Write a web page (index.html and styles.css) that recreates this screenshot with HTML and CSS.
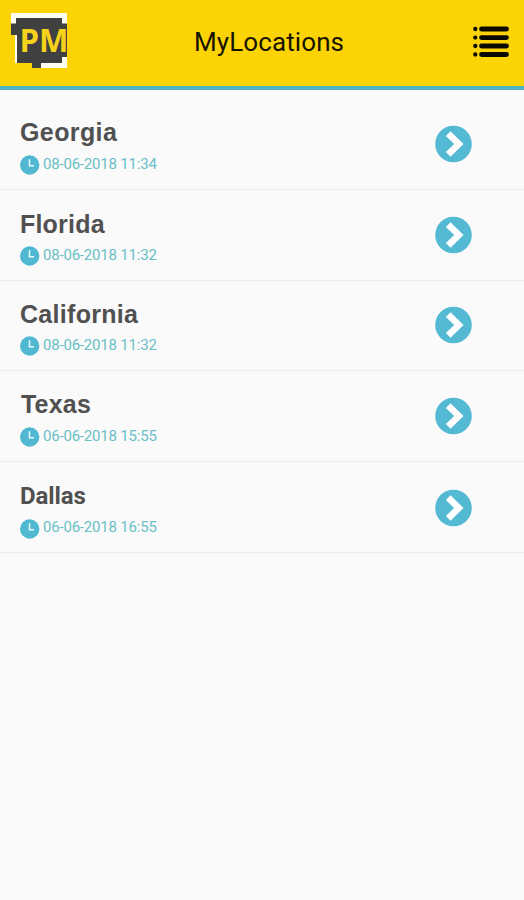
FILE: index.html
```
<!DOCTYPE html>
<html lang="en">
  <head>
    <meta charset="utf-8">
    <title>MyLocations</title>
    <link rel="stylesheet" href="styles.css">
  </head>
  <body>
    <svg class="symbols">
      <symbol id="clock" viewBox="0 0 20 20">
        <circle cx="9.7" cy="10" r="9.7" fill="#50b8d1"/>
        <path d="M9.500 4.200V10.800H14" fill="none" stroke="#e9fbff" stroke-width="1.500"/>
      </symbol>
      <symbol id="go" viewBox="0 0 38 38">
        <circle cx="19.500" cy="19" r="18.300" fill="#54b9d3"/>
        <path d="M14.200 8.700L24.800 19L14.200 29.300" fill="none" stroke="#fff" stroke-width="6.600"/>
      </symbol>
    </svg>
    <header class="topbar">
      <svg class="logo" width="60" height="60" viewBox="0 0 60 60">
        <path d="M1 2H57V57H31V52H5V24H1Z" fill="#fffdf0"/>
        <path d="M6 7H52V12.500H57V46H52V52H31V57H22V52H7V24H1V12.500H6Z" fill="#3f4040"/>
        <text class="logo-text" x="9.500" y="41" textLength="49" lengthAdjust="spacingAndGlyphs">PM</text>
      </svg>
      <h1>MyLocations</h1>
      <svg class="menu" width="38" height="34" viewBox="0 0 38 34">
        <g stroke="#0b0900" stroke-width="4.800" stroke-linecap="round">
          <path d="M9.500 4H34.500M9.500 12.600H34.500M9.500 21H34.500M9.500 29.500H34.500"/>
          <path stroke-width="4.300" d="M3.300 4h.01M3.300 12.600h.01M3.300 21h.01M3.300 29.500h.01"/>
        </g>
      </svg>
    </header>
    <ul class="locations">
      <li>
        <div class="info">
          <h2>Georgia</h2>
          <p><svg class="clock"><use href="#clock"/></svg><span>08-06-2018 11:34</span></p>
        </div>
        <svg class="go"><use href="#go"/></svg>
      </li>
      <li>
        <div class="info">
          <h2 class="florida">Florida</h2>
          <p><svg class="clock"><use href="#clock"/></svg><span>08-06-2018 11:32</span></p>
        </div>
        <svg class="go"><use href="#go"/></svg>
      </li>
      <li class="short">
        <div class="info">
          <h2 class="california">California</h2>
          <p><svg class="clock"><use href="#clock"/></svg><span>08-06-2018 11:32</span></p>
        </div>
        <svg class="go"><use href="#go"/></svg>
      </li>
      <li>
        <div class="info">
          <h2 class="texas">Texas</h2>
          <p><svg class="clock"><use href="#clock"/></svg><span>06-06-2018 15:55</span></p>
        </div>
        <svg class="go"><use href="#go"/></svg>
      </li>
      <li class="last">
        <div class="info">
          <h2 class="dallas">Dallas</h2>
          <p><svg class="clock"><use href="#clock"/></svg><span>06-06-2018 16:55</span></p>
        </div>
        <svg class="go"><use href="#go"/></svg>
      </li>
    </ul>
  </body>
</html>
```
FILE: styles.css
```
* {
  box-sizing: border-box;
}
body {
  margin: 0;
  min-height: 100vh;
  background: #fafafa;
  font-family: Roboto, "Liberation Sans", sans-serif;
}
.symbols {
  display: none;
}
.topbar {
  display: grid;
  grid-template-columns: 184px 1fr 61px;
  height: 90px;
  padding-left: 10px;
  background: #fcd405;
  border-bottom: 4px solid #4db2c4;
}
.topbar h1 {
  margin: 27px 0 0;
  color: #171300;
  font-size: 26px;
  line-height: 30px;
  font-weight: 400;
  letter-spacing: 0.1px;
  white-space: nowrap;
}
.logo {
  margin-top: 11px;
}
.logo-text {
  font: 700 32px "Open Sans", sans-serif;
  fill: #f6d21a;
}
.menu {
  margin: 25px 0 0 9px;
}
.locations {
  margin: 0;
  padding: 9px 0 0;
  list-style: none;
}
.locations li {
  display: flex;
  justify-content: space-between;
  height: 91px;
  padding: 18px 52px 0 20px;
  border-bottom: 1px solid #ececec;
}
.locations li.short {
  height: 90px;
  padding-top: 17px;
}
.locations li.last {
  padding-top: 18.5px;
}
.info h2 {
  margin: 0;
  height: 38px;
  color: #505050;
  font: bold 25px/30px "Liberation Sans", Arial, sans-serif;
  letter-spacing: 0.4px;
}
.info .florida {
  padding-top: 1px;
  letter-spacing: 0.2px;
}
.info .california {
  padding-top: 1px;
  letter-spacing: 0.3px;
}
.info .texas {
  padding-left: 1px;
  letter-spacing: 0.2px;
}
.info .dallas {
  font: bold 24px/30px Roboto, sans-serif;
  letter-spacing: -0.1px;
}
.info p {
  display: flex;
  align-items: center;
  gap: 3px;
  margin: 0;
  height: 20px;
  color: #69bfc6;
  font-size: 15px;
  line-height: 18px;
  letter-spacing: -0.2px;
}
.info span {
  margin-top: -3px;
}
.clock {
  width: 20px;
  height: 20px;
}
.go {
  width: 38px;
  height: 38px;
  margin-top: 8px;
}
```
